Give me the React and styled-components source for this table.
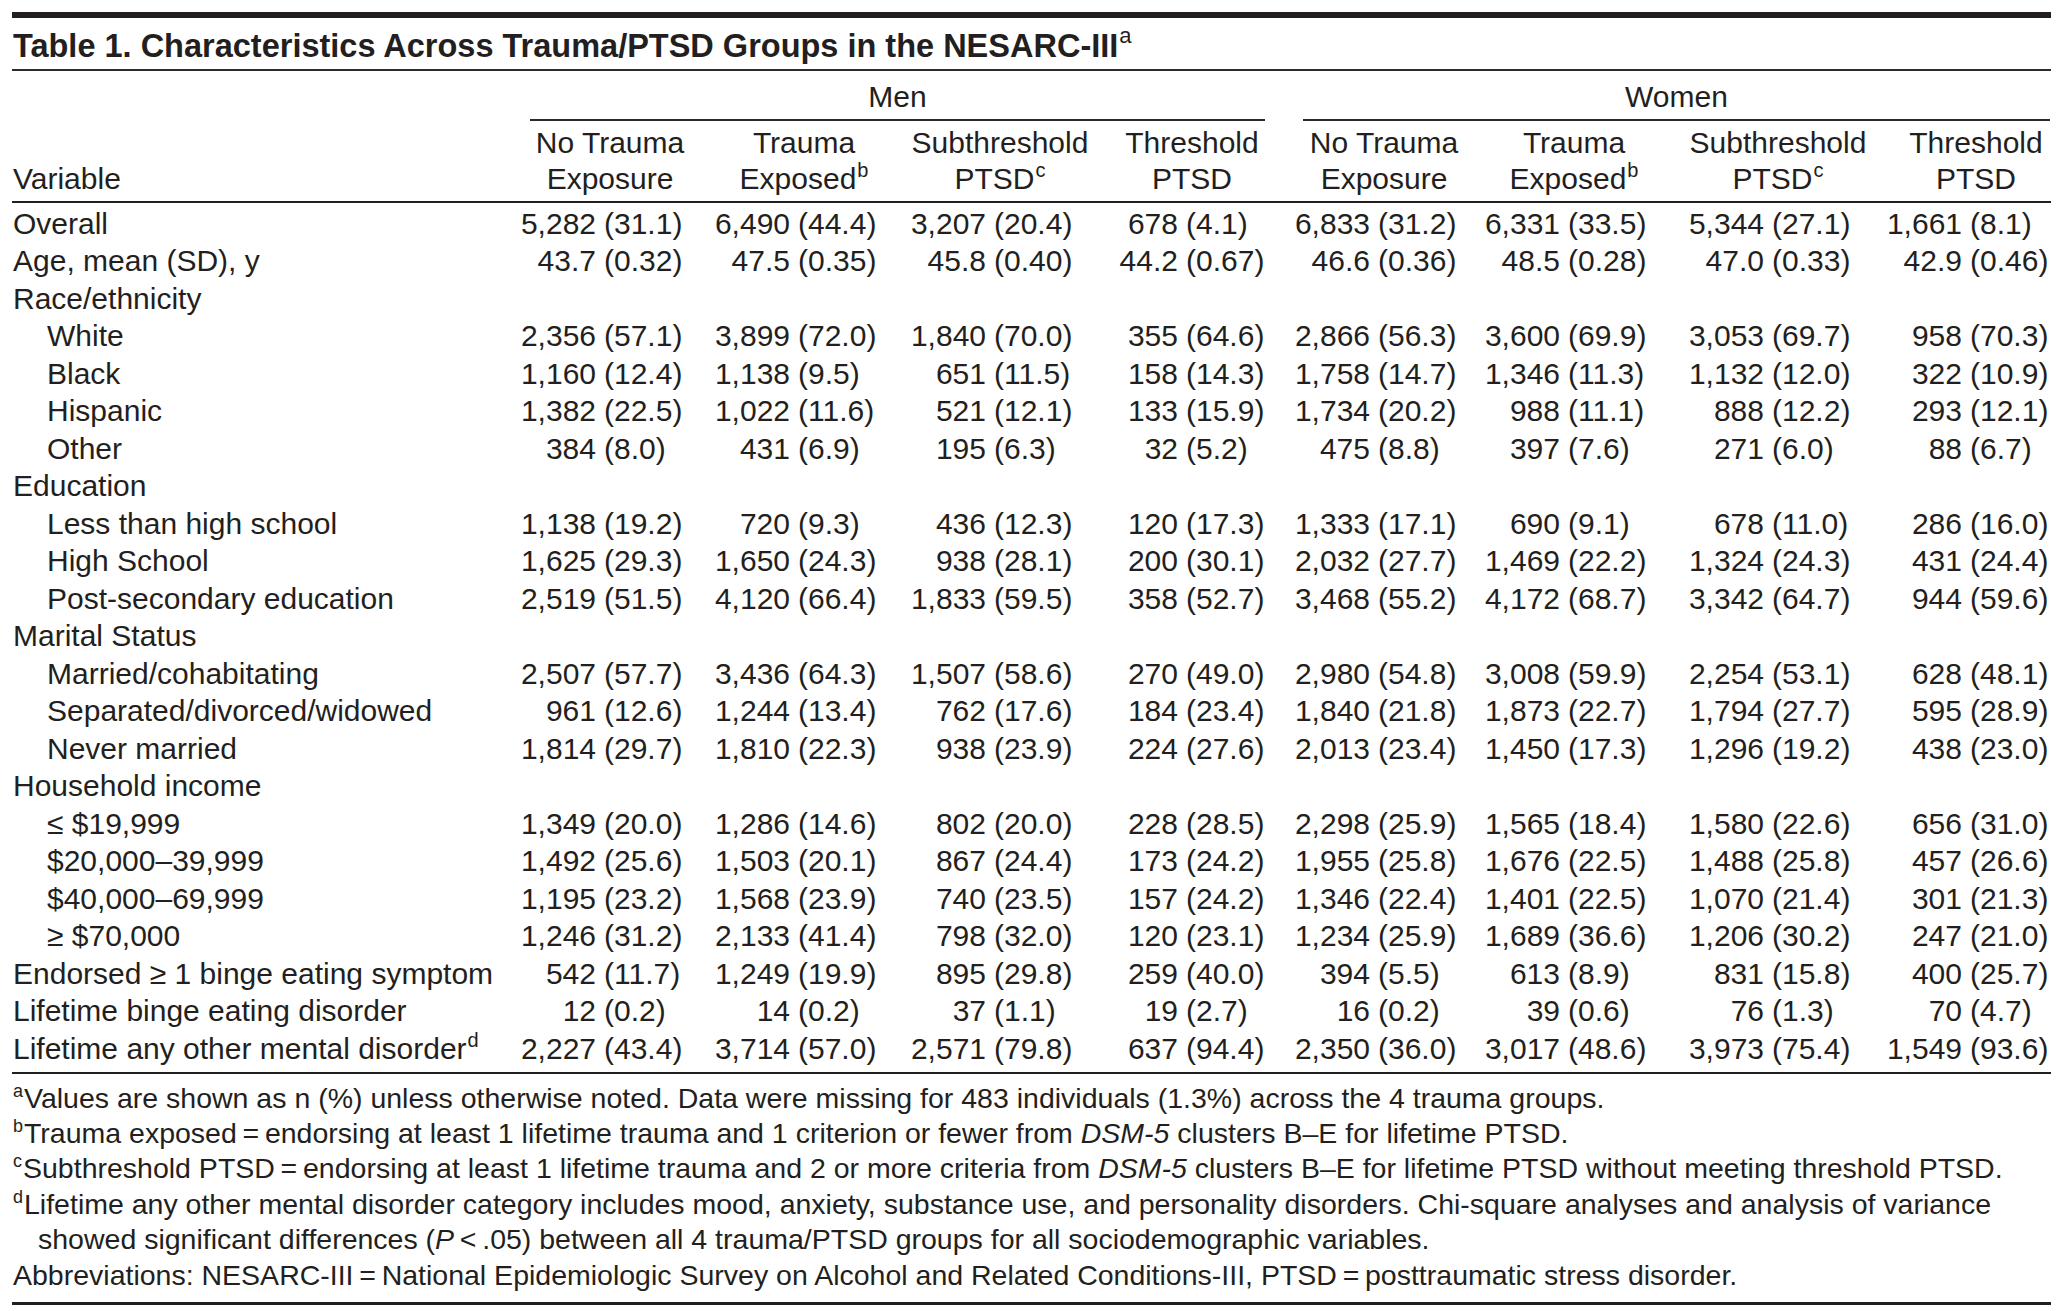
import React from 'react'
import styled, { createGlobalStyle } from 'styled-components'

// grid shared by header and rows: variable column + 8 group columns
const COLS = '504px 194px 196px 192px 192px 190px 204px 198px 169px'

const GlobalStyle = createGlobalStyle`
  html, body {
    margin: 0;
    padding: 0;
    background: #ffffff;
    overflow: hidden;
  }
  body {
    font-family: "Liberation Sans", Arial, sans-serif;
    color: #231f20;
  }
`

const heads = [
  ['No Trauma', 'Exposure'],
  ['Trauma', 'Exposed', 'b'],
  ['Subthreshold', 'PTSD', 'c'],
  ['Threshold', 'PTSD'],
  ['No Trauma', 'Exposure'],
  ['Trauma', 'Exposed', 'b'],
  ['Subthreshold', 'PTSD', 'c'],
  ['Threshold', 'PTSD'],
]

const rows = [
  { label: 'Overall', data: ['5,282 (31.1)', '6,490 (44.4)', '3,207 (20.4)', '678 (4.1)', '6,833 (31.2)', '6,331 (33.5)', '5,344 (27.1)', '1,661 (8.1)'] },
  { label: 'Age, mean (SD), y', data: ['43.7 (0.32)', '47.5 (0.35)', '45.8 (0.40)', '44.2 (0.67)', '46.6 (0.36)', '48.5 (0.28)', '47.0 (0.33)', '42.9 (0.46)'] },
  { label: 'Race/ethnicity' },
  { label: 'White', sub: true, data: ['2,356 (57.1)', '3,899 (72.0)', '1,840 (70.0)', '355 (64.6)', '2,866 (56.3)', '3,600 (69.9)', '3,053 (69.7)', '958 (70.3)'] },
  { label: 'Black', sub: true, data: ['1,160 (12.4)', '1,138 (9.5)', '651 (11.5)', '158 (14.3)', '1,758 (14.7)', '1,346 (11.3)', '1,132 (12.0)', '322 (10.9)'] },
  { label: 'Hispanic', sub: true, data: ['1,382 (22.5)', '1,022 (11.6)', '521 (12.1)', '133 (15.9)', '1,734 (20.2)', '988 (11.1)', '888 (12.2)', '293 (12.1)'] },
  { label: 'Other', sub: true, data: ['384 (8.0)', '431 (6.9)', '195 (6.3)', '32 (5.2)', '475 (8.8)', '397 (7.6)', '271 (6.0)', '88 (6.7)'] },
  { label: 'Education' },
  { label: 'Less than high school', sub: true, data: ['1,138 (19.2)', '720 (9.3)', '436 (12.3)', '120 (17.3)', '1,333 (17.1)', '690 (9.1)', '678 (11.0)', '286 (16.0)'] },
  { label: 'High School', sub: true, data: ['1,625 (29.3)', '1,650 (24.3)', '938 (28.1)', '200 (30.1)', '2,032 (27.7)', '1,469 (22.2)', '1,324 (24.3)', '431 (24.4)'] },
  { label: 'Post-secondary education', sub: true, data: ['2,519 (51.5)', '4,120 (66.4)', '1,833 (59.5)', '358 (52.7)', '3,468 (55.2)', '4,172 (68.7)', '3,342 (64.7)', '944 (59.6)'] },
  { label: 'Marital Status' },
  { label: 'Married/cohabitating', sub: true, data: ['2,507 (57.7)', '3,436 (64.3)', '1,507 (58.6)', '270 (49.0)', '2,980 (54.8)', '3,008 (59.9)', '2,254 (53.1)', '628 (48.1)'] },
  { label: 'Separated/divorced/widowed', sub: true, data: ['961 (12.6)', '1,244 (13.4)', '762 (17.6)', '184 (23.4)', '1,840 (21.8)', '1,873 (22.7)', '1,794 (27.7)', '595 (28.9)'] },
  { label: 'Never married', sub: true, data: ['1,814 (29.7)', '1,810 (22.3)', '938 (23.9)', '224 (27.6)', '2,013 (23.4)', '1,450 (17.3)', '1,296 (19.2)', '438 (23.0)'] },
  { label: 'Household income' },
  { label: '\u2264 $19,999', sub: true, data: ['1,349 (20.0)', '1,286 (14.6)', '802 (20.0)', '228 (28.5)', '2,298 (25.9)', '1,565 (18.4)', '1,580 (22.6)', '656 (31.0)'] },
  { label: '$20,000\u201339,999', sub: true, data: ['1,492 (25.6)', '1,503 (20.1)', '867 (24.4)', '173 (24.2)', '1,955 (25.8)', '1,676 (22.5)', '1,488 (25.8)', '457 (26.6)'] },
  { label: '$40,000\u201369,999', sub: true, data: ['1,195 (23.2)', '1,568 (23.9)', '740 (23.5)', '157 (24.2)', '1,346 (22.4)', '1,401 (22.5)', '1,070 (21.4)', '301 (21.3)'] },
  { label: '\u2265 $70,000', sub: true, data: ['1,246 (31.2)', '2,133 (41.4)', '798 (32.0)', '120 (23.1)', '1,234 (25.9)', '1,689 (36.6)', '1,206 (30.2)', '247 (21.0)'] },
  { label: 'Endorsed \u2265 1 binge eating symptom', data: ['542 (11.7)', '1,249 (19.9)', '895 (29.8)', '259 (40.0)', '394 (5.5)', '613 (8.9)', '831 (15.8)', '400 (25.7)'] },
  { label: 'Lifetime binge eating disorder', data: ['12 (0.2)', '14 (0.2)', '37 (1.1)', '19 (2.7)', '16 (0.2)', '39 (0.6)', '76 (1.3)', '70 (4.7)'] },
  { label: 'Lifetime any other mental disorder', note: 'd', data: ['2,227 (43.4)', '3,714 (57.0)', '2,571 (79.8)', '637 (94.4)', '2,350 (36.0)', '3,017 (48.6)', '3,973 (75.4)', '1,549 (93.6)'] },
]

const T = '\u2009'

const App = () => {
  return (
    <>
      <GlobalStyle />
      <Page>
        <Title>
          Table 1. Characteristics Across Trauma/PTSD Groups in the NESARC-III<TitleSup>a</TitleSup>
        </Title>

        <Header>
          <span />
          <GroupLabel $left={14} $right={25}>Men</GroupLabel>
          <GroupLabel $left={13} $right={1}>Women</GroupLabel>
          <VariableHead>Variable</VariableHead>
          {heads.map((h, i) => (
            <ColHead key={i}>
              {h[0]}
              <br />
              {h[1]}
              {h[2] && <Sup>{h[2]}</Sup>}
            </ColHead>
          ))}
        </Header>

        <Body>
          {rows.map((r, i) => (
            <Row key={i}>
              <Label $sub={r.sub}>
                {r.label}
                {r.note && <Sup>{r.note}</Sup>}
              </Label>
              {r.data &&
                r.data.map((d, j) => {
                  const k = d.indexOf(' (')
                  return (
                    <Cell key={j}>
                      <Count>{d.slice(0, k)}</Count>
                      <Pct>{d.slice(k + 1)}</Pct>
                    </Cell>
                  )
                })}
            </Row>
          ))}
        </Body>

        <Notes>
          <Note>
            <NoteMark>a</NoteMark>Values are shown as n (%) unless otherwise noted. Data were missing for 483 individuals (1.3%) across the 4 trauma groups.
          </Note>
          <Note>
            <NoteMark>b</NoteMark>Trauma exposed{T}={T}endorsing at least 1 lifetime trauma and 1 criterion or fewer from <Em>DSM-5</Em> clusters B–E for lifetime PTSD.
          </Note>
          <Note>
            <NoteMark>c</NoteMark>Subthreshold PTSD{T}={T}endorsing at least 1 lifetime trauma and 2 or more criteria from <Em>DSM-5</Em> clusters B–E for lifetime PTSD without meeting threshold PTSD.
          </Note>
          <Note>
            <NoteMark>d</NoteMark>Lifetime any other mental disorder category includes mood, anxiety, substance use, and personality disorders. Chi-square analyses and analysis of variance
            <br />
            showed significant differences (<Em>P</Em>{T}&lt;{T}.05) between all 4 trauma/PTSD groups for all sociodemographic variables.
          </Note>
          <Note>
            Abbreviations: NESARC-III{T}={T}National Epidemiologic Survey on Alcohol and Related Conditions-III, PTSD{T}={T}posttraumatic stress disorder.
          </Note>
        </Notes>
      </Page>
    </>
  )
}

export default App

const Page = styled.div`
  width: 2039px;
  padding: 12px 0 0 12px;
  font-size: 30px;
`

const Title = styled.div`
  border-top: 6px solid #231f20;
  border-bottom: 2px solid #2d2a2b;
  padding: 8px 0 3px 1px;
  font-size: 32.5px;
  font-weight: 700;
  line-height: 40px;
  white-space: nowrap;
`

const TitleSup = styled.sup`
  font-size: 22px;
  font-weight: 400;
  line-height: 0;
  vertical-align: baseline;
  position: relative;
  top: -14px;
  margin-left: 1px;
`

const Sup = styled.sup`
  font-size: 20px;
  line-height: 0;
  vertical-align: baseline;
  position: relative;
  top: -12px;
  margin-left: 1px;
`

const Header = styled.div`
  display: grid;
  grid-template-columns: ${COLS};
  border-bottom: 2px solid #231f20;
  line-height: 36px;
`

const GroupLabel = styled.div`
  grid-column: span 4;
  margin: 0 ${(p) => p.$right}px 0 ${(p) => p.$left}px;
  padding: 8px 0 4px;
  border-bottom: 2px solid #2d2a2b;
  text-align: center;
`

const VariableHead = styled.div`
  align-self: end;
  padding: 0 0 4px 1px;
`

const ColHead = styled.div`
  width: 188px;
  padding: 4px 0;
  text-align: center;
  white-space: nowrap;
`

const Body = styled.div`
  padding: 1.5px 0 5px;
  border-bottom: 2px solid #231f20;
`

const Row = styled.div`
  display: grid;
  grid-template-columns: ${COLS};
  height: 37.5px;
  line-height: 37.5px;
  white-space: nowrap;
`

const Label = styled.div`
  padding-left: ${(p) => (p.$sub ? 35 : 1)}px;
`

const Cell = styled.div`
  display: flex;
`

const Count = styled.span`
  width: 80px;
  text-align: right;
`

const Pct = styled.span`
  margin-left: 8px;
`

const Notes = styled.div`
  padding: 6.5px 0 9px;
  border-bottom: 3px solid #231f20;
  font-size: 28.5px;
  line-height: 35.4px;
`

const Note = styled.div`
  padding-left: 26px;
  text-indent: -25px;
  white-space: nowrap;
`

const NoteMark = styled.sup`
  font-size: 18px;
  line-height: 0;
  vertical-align: baseline;
  position: relative;
  top: -11px;
  margin-right: 1px;
`

const Em = styled.i`
  font-style: italic;
`
